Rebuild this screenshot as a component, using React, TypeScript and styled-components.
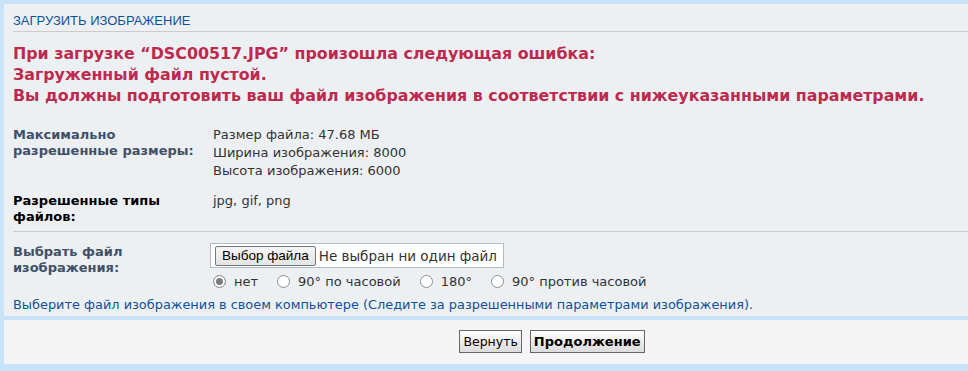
import styled, { createGlobalStyle } from 'styled-components';

const GlobalStyle = createGlobalStyle`
  html, body {
    margin: 0;
    padding: 0;
    background: #c9e4f8;
    overflow: hidden;
  }
  body {
    font-family: "DejaVu Sans", Verdana, sans-serif;
  }
`;

const Page = styled.div`
  width: 1096px;
  margin: 4px;
`;

const Panel = styled.div<{ $alt?: boolean }>`
  background: ${(p) => (p.$alt ? '#f5f5f5' : '#ecf0f3')};
  padding: ${(p) => (p.$alt ? '10px 0 11px' : '8px 0 0 9px')};
  margin-bottom: 4px;
  text-align: ${(p) => (p.$alt ? 'center' : 'left')};
`;

const Title = styled.h3`
  margin: 0;
  font-family: "Liberation Sans", Arial, sans-serif;
  font-weight: normal;
  font-size: 13px;
  line-height: 18px;
  padding-bottom: 1px;
  color: #115098;
  text-transform: uppercase;
  border-bottom: 1px solid #cccccc;
`;

const ErrorText = styled.p`
  margin: 11px 0 0;
  font-size: 15.85px;
  font-weight: bold;
  line-height: 21px;
  color: #bc2a4d;
`;

const Fields = styled.div`
  margin-top: 20px;
`;

const Row = styled.div<{ $gap?: number }>`
  display: grid;
  grid-template-columns: 200px 1fr;
  margin-top: ${(p) => p.$gap ?? 0}px;
`;

const Label = styled.div<{ $dark?: boolean }>`
  font-size: 13px;
  font-weight: bold;
  line-height: 16px;
  color: ${(p) => (p.$dark ? '#000000' : '#425067')};
  padding-top: 1px;
`;

const Values = styled.div`
  font-size: 13px;
  line-height: 18px;
  color: #333333;
`;

const Separator = styled.hr`
  border: 0;
  border-top: 1px solid #cccccc;
  margin: 6px 0 0;
`;

const FileBox = styled.div`
  display: inline-flex;
  align-items: center;
  gap: 3px;
  box-sizing: border-box;
  width: 294px;
  height: 25px;
  margin-left: -3px;
  padding: 0 4px;
  background: #ffffff;
  border: 1px solid #b4bac0;
  font-size: 13.5px;
  color: #333333;
`;

const PickButton = styled.span`
  display: inline-block;
  box-sizing: border-box;
  height: 20px;
  padding: 0 6px;
  line-height: 18px;
  font-family: "Liberation Sans", Arial, sans-serif;
  font-size: 13.5px;
  color: #000000;
  background: linear-gradient(#f6f6f6, #e4e4e4);
  border: 1px solid #767676;
  border-radius: 2px;
`;

const Radios = styled.div`
  display: flex;
  align-items: center;
  margin-top: 4px;
  height: 19px;
  font-size: 13px;
  color: #333333;
`;

const RadioItem = styled.label`
  display: inline-flex;
  align-items: center;
  margin-right: 19px;
`;

const RadioDot = styled.span<{ $on?: boolean }>`
  box-sizing: border-box;
  width: 13px;
  height: 13px;
  margin-right: 8px;
  border-radius: 50%;
  border: 1px solid ${(p) => (p.$on ? '#8a8a8a' : '#8f8f8f')};
  background: #ffffff;
  box-shadow: ${(p) => (p.$on ? 'inset 0 0 0 2px #fff, inset 0 0 0 6px #7c7c7c' : 'none')};
`;

const Help = styled.div`
  margin-top: 5px;
  padding-bottom: 2px;
  font-size: 12.9px;
  line-height: 18px;
  color: #115098;
`;

const Button = styled.button<{ $bold?: boolean }>`
  font-family: "DejaVu Sans", Verdana, sans-serif;
  font-size: ${(p) => (p.$bold ? '13px' : '12.5px')};
  font-weight: ${(p) => (p.$bold ? 'bold' : 'normal')};
  height: 23px;
  padding: 0 3px;
  margin: 0 4px;
  color: #000000;
  background: linear-gradient(#ffffff, #dcdcdc);
  border: 1px solid #666666;
  border-radius: 0;
`;

const rotations = ['нет', '90° по часовой', '180°', '90° против часовой'];

export default function App() {
  return (
    <>
      <GlobalStyle />
      <Page>
        <Panel>
          <Title>Загрузить изображение</Title>
          <ErrorText>
            При загрузке “DSC00517.JPG” произошла следующая ошибка:
            <br />
            Загруженный файл пустой.
            <br />
            Вы должны подготовить ваш файл изображения в соответствии с нижеуказанными параметрами.
          </ErrorText>
          <Fields>
            <Row>
              <Label>
                Максимально
                <br />
                разрешенные размеры:
              </Label>
              <Values>
                Размер файла: 47.68 МБ
                <br />
                Ширина изображения: 8000
                <br />
                Высота изображения: 6000
              </Values>
            </Row>
            <Row $gap={12}>
              <Label $dark>
                Разрешенные типы
                <br />
                файлов:
              </Label>
              <Values>jpg, gif, png</Values>
            </Row>
          </Fields>
          <Separator />
          <Row $gap={11}>
            <Label>
              Выбрать файл
              <br />
              изображения:
            </Label>
            <div>
              <FileBox>
                <PickButton>Выбор файла</PickButton>
                <span>Не выбран ни один файл</span>
              </FileBox>
              <Radios>
                {rotations.map((r, i) => (
                  <RadioItem key={r}>
                    <RadioDot $on={i === 0} />
                    {r}
                  </RadioItem>
                ))}
              </Radios>
            </div>
          </Row>
          <Help>
            Выберите файл изображения в своем компьютере (Следите за разрешенными параметрами
            изображения).
          </Help>
        </Panel>
        <Panel $alt>
          <Button>Вернуть</Button>
          <Button $bold>Продолжение</Button>
        </Panel>
      </Page>
    </>
  );
}
